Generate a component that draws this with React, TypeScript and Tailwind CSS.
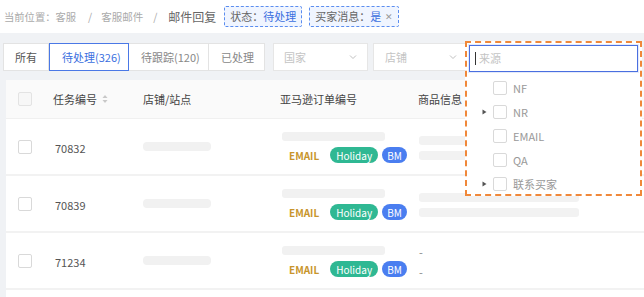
import React from "react";

const font = { fontFamily: '"Noto Sans CJK SC", "Noto Sans", sans-serif' };

function Checkbox() {
  return <div className="w-[14px] h-[14px] border border-[#d9d9d9] rounded-[2px] bg-white" />;
}

function Chevron() {
  return (
    <svg width="10" height="10" viewBox="0 0 10 10" fill="none">
      <path d="M2 3.5 L5 6.5 L8 3.5" stroke="#c0c0c0" strokeWidth="1" />
    </svg>
  );
}

function Caret() {
  return (
    <svg width="5" height="6" viewBox="0 0 5 6">
      <path d="M0.5 0.5 L4.5 3 L0.5 5.5 Z" fill="#555" />
    </svg>
  );
}

const rows = [
  { id: "70832", dash: false },
  { id: "70839", dash: false },
  { id: "71234", dash: true },
];

export default function App() {
  return (
    <div className="w-[644px] h-[297px] overflow-hidden bg-[#f0f2f5] relative text-[11px]" style={font}>
      {/* breadcrumb */}
      <div className="h-[33px] bg-white flex items-center pl-[4px] text-[#aaa]">
        <span className="text-[10.3px]">当前位置：客服</span>
        <span className="ml-[12px] mr-[9px] text-[10.5px]">/</span>
        <span className="text-[10.5px]">客服邮件</span>
        <span className="ml-[10px] mr-[11px] text-[10.5px]">/</span>
        <span className="text-[#666] text-[12px]">邮件回复</span>
        <div className="ml-[8px] h-[21px] px-[5px] flex items-center border border-dashed border-[#5b8def] bg-[#f0f5ff] rounded-[2px]">
          <span className="text-[#666]">状态：</span>
          <span className="text-[#3b6fe0]">待处理</span>
        </div>
        <div className="ml-[7px] h-[21px] px-[5px] flex items-center border border-dashed border-[#5b8def] bg-[#f0f5ff] rounded-[2px]">
          <span className="text-[#666]">买家消息：</span>
          <span className="text-[#3b6fe0]">是</span>
          <span className="ml-[4px] text-[#999] text-[9px]">✕</span>
        </div>
      </div>

      {/* filter row */}
      <div className="h-[47px] flex items-start pt-[10px] pl-[3px]">
        <div className="flex h-[28px]">
          <div className="w-[46px] h-full flex items-center pl-[11px] bg-white border border-[#e3e3e3] text-[#555]">所有</div>
          <div className="w-[80px] h-full flex items-center pl-[12px] bg-white border border-[#4a78e6] text-[#3b6fe0]">待处理(326)</div>
          <div className="w-[80px] h-full flex items-center pl-[12px] bg-white border border-[#e3e3e3] border-l-0 text-[#888]">待跟踪(120)</div>
          <div className="w-[56px] h-full flex items-center pl-[12px] bg-white border border-[#e3e3e3] border-l-0 text-[#888]">已处理</div>
        </div>
        <div className="ml-[8px] w-[95px] h-[28px] bg-white border border-[#e6e6e6] flex items-center justify-between pl-[10px] pr-[9px] text-[#c4c4c4]">
          <span>国家</span>
          <Chevron />
        </div>
        <div className="ml-[5px] w-[95px] h-[28px] bg-white border border-[#e6e6e6] flex items-center justify-between pl-[11px] pr-[9px] text-[#c4c4c4]">
          <span>店铺</span>
          <Chevron />
        </div>
      </div>

      {/* table */}
      <div className="ml-[6px] bg-white h-[217px]">
        <div className="h-[39px] bg-[#fafafa] flex items-center text-[#444] border-b border-[#f0f0f0]">
          <div className="w-[36px] flex justify-center pl-[1px]"><div className="w-[14px] h-[14px] border border-[#e3e3e3] bg-[#f7f7f7] rounded-[2px]" /></div>
          <div className="w-[91px] pl-[11px] flex items-center">
            <span>任务编号</span>
            <svg className="ml-[5px]" width="6" height="10" viewBox="0 0 6 10">
              <path d="M3 1 L5.5 4 L0.5 4 Z" fill="#c8c8c8" />
              <path d="M3 9 L5.5 6 L0.5 6 Z" fill="#c8c8c8" />
            </svg>
          </div>
          <div className="w-[136px] pl-[10px]">店铺/站点</div>
          <div className="w-[138px] pl-[11px]">亚马逊订单编号</div>
          <div className="pl-[11px]">商品信息</div>
        </div>
        {rows.map((r) => (
          <div key={r.id} className="h-[57px] flex items-center border-b-2 border-[#f2f2f2] text-[#555]">
            <div className="w-[36px] flex justify-center pl-[1px]"><Checkbox /></div>
            <div className="w-[91px] pl-[13px] mt-[3px]">{r.id}</div>
            <div className="w-[136px] pl-[10px]">
              <div className="w-[68px] h-[9px] bg-[#f1f1f1] rounded-[4px]" />
            </div>
            <div className="w-[138px] pl-[13px] flex flex-col gap-[6px] pt-[2px]">
              <div className="w-[103px] h-[9px] bg-[#f1f1f1] rounded-[3px]" />
              <div className="flex items-center">
                <span className="ml-[7px] text-[#c8952c] font-bold text-[10px]">EMAIL</span>
                <span className="ml-[11px] h-[16px] px-[6px] rounded-full bg-[#2fb893] text-white text-[10px] flex items-center">Holiday</span>
                <span className="ml-[4px] h-[16px] px-[5px] rounded-full bg-[#4a7ef0] text-white text-[10px] flex items-center">BM</span>
              </div>
            </div>
            <div className="pl-[12px] flex flex-col gap-[6px] pt-[2px]">
              {r.dash ? (
                <>
                  <span className="text-[#888] leading-[10px]">-</span>
                  <span className="text-[#888] leading-[10px] mt-[4px]">-</span>
                </>
              ) : (
                <>
                  <div className="w-[160px] h-[9px] bg-[#f2f2f2] rounded-[3px]" />
                  <div className="w-[160px] h-[9px] bg-[#f2f2f2] rounded-[3px]" />
                </>
              )}
            </div>
          </div>
        ))}
      </div>

      {/* dropdown overlay */}
      <div className="absolute left-[465px] top-[41px] w-[177px] h-[155px] border-2 border-dashed border-[#f0883a] bg-white p-[2px] flex flex-col">
        <div className="h-[27px] shrink-0 border border-[#4a6fe0] flex items-center pl-[5px] text-[#c4c4c4] shadow-[0_0_0_1px_rgba(74,111,224,0.15)]">
          <span className="w-[1px] h-[13px] bg-[#333] mr-[3px]" />
          <span>来源</span>
        </div>
        <div className="flex flex-col pt-[4px] text-[#999]">
          {[
            { t: "NF", c: false },
            { t: "NR", c: true },
            { t: "EMAIL", c: false },
            { t: "QA", c: false },
            { t: "联系买家", c: true },
          ].map((it) => (
            <div key={it.t} className="h-[24px] shrink-0 flex items-center">
              <div className="w-[11px] ml-[13px] flex items-center">{it.c ? <Caret /> : null}</div>
              <Checkbox />
              <span className="ml-[6px]">{it.t}</span>
            </div>
          ))}
        </div>
      </div>
    </div>
  );
}
